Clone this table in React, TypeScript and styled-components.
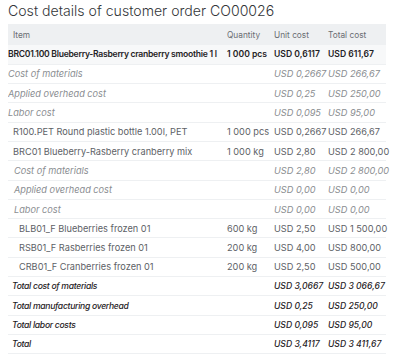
import styled, { createGlobalStyle } from 'styled-components';

const GlobalStyle = createGlobalStyle`
  body {
    margin: 0;
    background: #ffffff;
    font-family: Inter, "Open Sans", sans-serif;
  }
`;

type Kind = 'main' | 'cost' | 'part' | 'total';

interface CostRow {
  item: string;
  quantity?: string;
  unit: string;
  total: string;
  kind: Kind;
  indent: number;
}

const ROWS: CostRow[] = [
  { item: 'BRC01.100 Blueberry-Rasberry cranberry smoothie 1 l', quantity: '1 000 pcs', unit: 'USD 0,6117', total: 'USD 611,67', kind: 'main', indent: 0 },
  { item: 'Cost of materials', unit: 'USD 0,2667', total: 'USD 266,67', kind: 'cost', indent: 0 },
  { item: 'Applied overhead cost', unit: 'USD 0,25', total: 'USD 250,00', kind: 'cost', indent: 0 },
  { item: 'Labor cost', unit: 'USD 0,095', total: 'USD 95,00', kind: 'cost', indent: 0 },
  { item: 'R100.PET Round plastic bottle 1.00l, PET', quantity: '1 000 pcs', unit: 'USD 0,2667', total: 'USD 266,67', kind: 'part', indent: 5 },
  { item: 'BRC01 Blueberry-Rasberry cranberry mix', quantity: '1 000 kg', unit: 'USD 2,80', total: 'USD 2 800,00', kind: 'part', indent: 5 },
  { item: 'Cost of materials', unit: 'USD 2,80', total: 'USD 2 800,00', kind: 'cost', indent: 6 },
  { item: 'Applied overhead cost', unit: 'USD 0,00', total: 'USD 0,00', kind: 'cost', indent: 6 },
  { item: 'Labor cost', unit: 'USD 0,00', total: 'USD 0,00', kind: 'cost', indent: 6 },
  { item: 'BLB01_F Blueberries frozen 01', quantity: '600 kg', unit: 'USD 2,50', total: 'USD 1 500,00', kind: 'part', indent: 11 },
  { item: 'RSB01_F Rasberries frozen 01', quantity: '200 kg', unit: 'USD 4,00', total: 'USD 800,00', kind: 'part', indent: 11 },
  { item: 'CRB01_F Cranberries frozen 01', quantity: '200 kg', unit: 'USD 2,50', total: 'USD 500,00', kind: 'part', indent: 11 },
  { item: 'Total cost of materials', unit: 'USD 3,0667', total: 'USD 3 066,67', kind: 'total', indent: 4 },
  { item: 'Total manufacturing overhead', unit: 'USD 0,25', total: 'USD 250,00', kind: 'total', indent: 4 },
  { item: 'Total labor costs', unit: 'USD 0,095', total: 'USD 95,00', kind: 'total', indent: 4 },
  { item: 'Total', unit: 'USD 3,4117', total: 'USD 3 411,67', kind: 'total', indent: 4 },
];

const strong = (k: Kind) => k === 'main' || k === 'total';

const Page = styled.div`
  padding: 0 8px;
`;

const Title = styled.h1`
  margin: 2px 0 4px;
  font-size: 14.1px;
  line-height: 18px;
  font-weight: 300;
  color: #333639;
`;

const Table = styled.table`
  width: 378px;
  border-collapse: collapse;
  table-layout: fixed;
`;

const HeadCell = styled.th<{ $pad?: number }>`
  height: 21px;
  padding: 0 0 0 ${p => p.$pad ?? 0}px;
  background: #eef0f2;
  color: #6a6e73;
  font-size: 8.3px;
  font-weight: 400;
  text-align: left;
  white-space: nowrap;
`;

const Row = styled.tr<{ $kind: Kind }>`
  height: 19.3px;
  border-bottom: 1px solid #eef0f2;
  background: ${p => (p.$kind === 'main' ? '#f7f8f9' : '#ffffff')};
  color: ${p => (strong(p.$kind) ? '#1f2225' : p.$kind === 'cost' ? '#8a8d91' : '#5d6166')};
  font-size: ${p => (strong(p.$kind) ? 8.6 : 9.2)}px;
  font-weight: ${p => (p.$kind === 'main' ? 600 : p.$kind === 'total' ? 500 : 400)};
  font-style: ${p => (p.$kind === 'cost' || p.$kind === 'total' ? 'italic' : 'normal')};

  td:first-child {
    overflow: hidden;
    letter-spacing: ${p => (p.$kind === 'main' ? '-0.27px' : p.$kind === 'total' ? '-0.3px' : '0')};
  }
`;

const Cell = styled.td<{ $pad?: number }>`
  padding: 0 0 0 ${p => p.$pad ?? 0}px;
  white-space: nowrap;
`;

export default function App() {
  return (
    <Page>
      <GlobalStyle />
      <Title>Cost details of customer order CO00026</Title>
      <Table>
        <colgroup>
          <col style={{ width: 219 }} />
          <col style={{ width: 47 }} />
          <col style={{ width: 54 }} />
          <col style={{ width: 58 }} />
        </colgroup>
        <thead>
          <tr>
            <HeadCell $pad={5}>Item</HeadCell>
            <HeadCell>Quantity</HeadCell>
            <HeadCell>Unit cost</HeadCell>
            <HeadCell>Total cost</HeadCell>
          </tr>
        </thead>
        <tbody>
          {ROWS.map((row, i) => (
            <Row key={i} $kind={row.kind}>
              <Cell $pad={row.indent}>{row.item}</Cell>
              <Cell>{row.quantity}</Cell>
              <Cell>{row.unit}</Cell>
              <Cell>{row.total}</Cell>
            </Row>
          ))}
        </tbody>
      </Table>
    </Page>
  );
}
